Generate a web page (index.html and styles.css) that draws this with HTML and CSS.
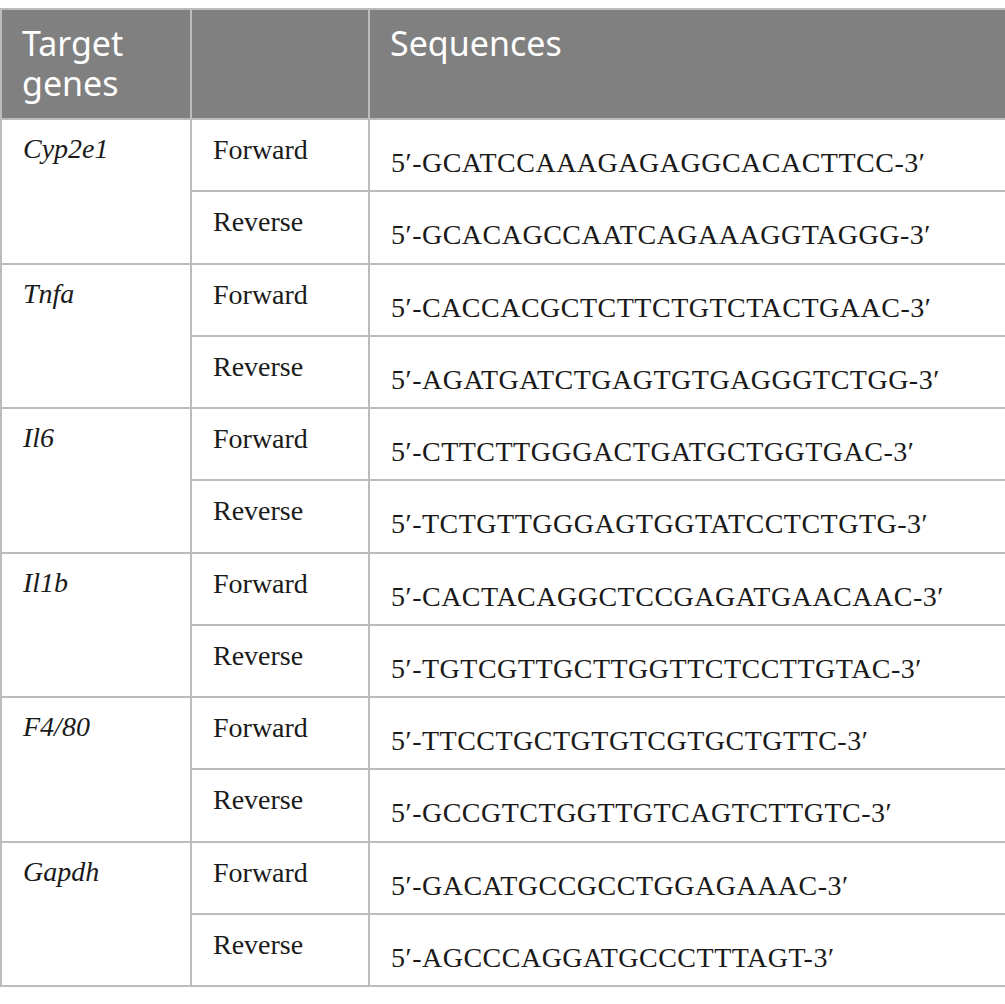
FILE: index.html
```html
<!DOCTYPE html>
<html>
<head>
<meta charset="utf-8">
<link rel="stylesheet" href="styles.css">
</head>
<body>
<table class="primers">
  <colgroup>
    <col class="c-gene">
    <col class="c-dir">
    <col class="c-seq">
  </colgroup>
  <thead>
    <tr class="head-row">
      <th><span class="hl">Target</span><span class="hl">genes</span></th>
      <th></th>
      <th><span class="hl">Sequences</span></th>
    </tr>
  </thead>
  <tbody>
    <tr><td class="gene" rowspan="2">Cyp2e1</td><td class="dir">Forward</td><td class="seq">5′-GCATCCAAAGAGAGGCACACTTCC-3′</td></tr>
    <tr><td class="dir">Reverse</td><td class="seq">5′-GCACAGCCAATCAGAAAGGTAGGG-3′</td></tr>
    <tr><td class="gene" rowspan="2">Tnfa</td><td class="dir">Forward</td><td class="seq">5′-CACCACGCTCTTCTGTCTACTGAAC-3′</td></tr>
    <tr><td class="dir">Reverse</td><td class="seq">5′-AGATGATCTGAGTGTGAGGGTCTGG-3′</td></tr>
    <tr><td class="gene" rowspan="2">Il6</td><td class="dir">Forward</td><td class="seq">5′-CTTCTTGGGACTGATGCTGGTGAC-3′</td></tr>
    <tr><td class="dir">Reverse</td><td class="seq">5′-TCTGTTGGGAGTGGTATCCTCTGTG-3′</td></tr>
    <tr><td class="gene" rowspan="2">Il1b</td><td class="dir">Forward</td><td class="seq">5′-CACTACAGGCTCCGAGATGAACAAC-3′</td></tr>
    <tr><td class="dir">Reverse</td><td class="seq">5′-TGTCGTTGCTTGGTTCTCCTTGTAC-3′</td></tr>
    <tr><td class="gene" rowspan="2">F4/80</td><td class="dir">Forward</td><td class="seq">5′-TTCCTGCTGTGTCGTGCTGTTC-3′</td></tr>
    <tr><td class="dir">Reverse</td><td class="seq">5′-GCCGTCTGGTTGTCAGTCTTGTC-3′</td></tr>
    <tr><td class="gene" rowspan="2">Gapdh</td><td class="dir">Forward</td><td class="seq">5′-GACATGCCGCCTGGAGAAAC-3′</td></tr>
    <tr><td class="dir">Reverse</td><td class="seq">5′-AGCCCAGGATGCCCTTTAGT-3′</td></tr>
  </tbody>
</table>
</body>
</html>
```

FILE: styles.css
```css
html, body {
  margin: 0;
  padding: 0;
  background: #ffffff;
}

body {
  padding-top: 8px;
}

.primers {
  border-collapse: collapse;
  width: 1005px;
  table-layout: fixed;
  border: 2px solid #bcbcbc;
  color: #1a1a1a;
}

.c-gene { width: 190px; }
.c-dir { width: 178px; }
.c-seq { width: 637px; }

.primers th,
.primers td {
  border: 2px solid #bcbcbc;
  text-align: left;
  vertical-align: top;
  padding: 0 10px 0 21px;
}

.primers .head-row th {
  background: #808080;
  color: #ffffff;
  font-family: "Noto Sans", "Open Sans", "DejaVu Sans", sans-serif;
  font-weight: 400;
  font-size: 34px;
  line-height: 40px;
  height: 110px;
  padding: 13px 10px 0 20px;
  box-sizing: border-box;
}

.hl {
  display: block;
  height: 40px;
}

.primers tbody tr {
  height: 72.25px;
}

.primers td {
  font-family: "Liberation Serif", "Times New Roman", serif;
  font-size: 28px;
  line-height: 34px;
}

.primers td.gene {
  font-style: italic;
  padding-top: 12px;
}

.primers td.dir {
  padding-top: 13px;
}

.primers td.seq {
  padding-top: 26px;
  letter-spacing: 0.5px;
}
```
